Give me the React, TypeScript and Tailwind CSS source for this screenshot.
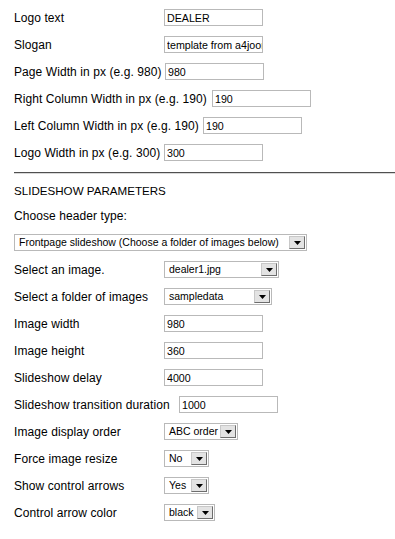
import React from "react";

const labelCls = "shrink-0 text-[12px] tracking-[0.08px] text-black";

function TextBox({ value }: { value: string }) {
  return (
    <input
      readOnly
      value={value}
      className="w-[99px] h-[17px] border border-[#b9b9b9] bg-white pl-[2px] text-[10.67px] text-black outline-none"
    />
  );
}

function Arrow() {
  return (
    <div className="w-[16px] h-[13px] mr-[1px] flex items-center justify-center bg-[#e3e3e3] border border-t-[#c8c8c8] border-l-[#c8c8c8] border-r-[#6d6d6d] border-b-[#6d6d6d]">
      <svg width="7" height="4" viewBox="0 0 7 4" className="mt-[1px]">
        <polygon points="0,0 7,0 3.5,4" fill="#000" />
      </svg>
    </div>
  );
}

function DropDown({ value, width }: { value: string; width: string }) {
  return (
    <div
      className={`${width} h-[17px] shrink-0 flex items-center border border-[#b9b9b9] bg-white text-[10.5px] text-black`}
    >
      <span className="flex-1 pl-[4px] whitespace-nowrap overflow-hidden">{value}</span>
      <Arrow />
    </div>
  );
}

function Row({
  label,
  labelW,
  children,
}: {
  label: string;
  labelW: string;
  children: React.ReactNode;
}) {
  return (
    <div className="h-[27px] flex items-center">
      <span className={`${labelCls} ${labelW}`}>{label}</span>
      {children}
    </div>
  );
}

export default function App() {
  return (
    <div className="w-[395px] h-[539px] bg-white pl-[14px] pt-[4px] font-['Liberation_Sans',Arial,sans-serif] overflow-hidden">
      <Row label="Logo text" labelW="w-[150px]">
        <TextBox value="DEALER" />
      </Row>
      <Row label="Slogan" labelW="w-[150px]">
        <TextBox value="template from a4joomla" />
      </Row>
      <Row label="Page Width in px (e.g. 980)" labelW="w-[151px]">
        <TextBox value="980" />
      </Row>
      <Row label="Right Column Width in px (e.g. 190)" labelW="w-[198px]">
        <TextBox value="190" />
      </Row>
      <Row label="Left Column Width in px (e.g. 190)" labelW="w-[189px]">
        <TextBox value="190" />
      </Row>
      <Row label="Logo Width in px (e.g. 300)" labelW="w-[150px]">
        <TextBox value="300" />
      </Row>

      <div className="mt-[6px] h-[2px] border-t border-t-[#505050] border-b border-b-[#d8d8d8]" />

      <div className="mt-[10px] text-[11.6px] leading-[14px] text-black">SLIDESHOW PARAMETERS</div>
      <div className="mt-[11px] text-[12px] tracking-[0.08px] leading-[14px] text-black">Choose header type:</div>

      <div className="mt-[6px] h-[27px] flex items-center">
        <DropDown value="Frontpage slideshow (Choose a folder of images below)" width="w-[293px]" />
      </div>
      <Row label="Select an image." labelW="w-[150px]">
        <DropDown value="dealer1.jpg" width="w-[115px]" />
      </Row>
      <Row label="Select a folder of images" labelW="w-[150px]">
        <DropDown value="sampledata" width="w-[108px]" />
      </Row>
      <Row label="Image width" labelW="w-[150px]">
        <TextBox value="980" />
      </Row>
      <Row label="Image height" labelW="w-[150px]">
        <TextBox value="360" />
      </Row>
      <Row label="Slideshow delay" labelW="w-[150px]">
        <TextBox value="4000" />
      </Row>
      <Row label="Slideshow transition duration" labelW="w-[165px]">
        <TextBox value="1000" />
      </Row>
      <Row label="Image display order" labelW="w-[150px]">
        <DropDown value="ABC order" width="w-[74px]" />
      </Row>
      <Row label="Force image resize" labelW="w-[150px]">
        <DropDown value="No" width="w-[45px]" />
      </Row>
      <Row label="Show control arrows" labelW="w-[150px]">
        <DropDown value="Yes" width="w-[45px]" />
      </Row>
      <Row label="Control arrow color" labelW="w-[150px]">
        <DropDown value="black" width="w-[51px]" />
      </Row>
    </div>
  );
}
